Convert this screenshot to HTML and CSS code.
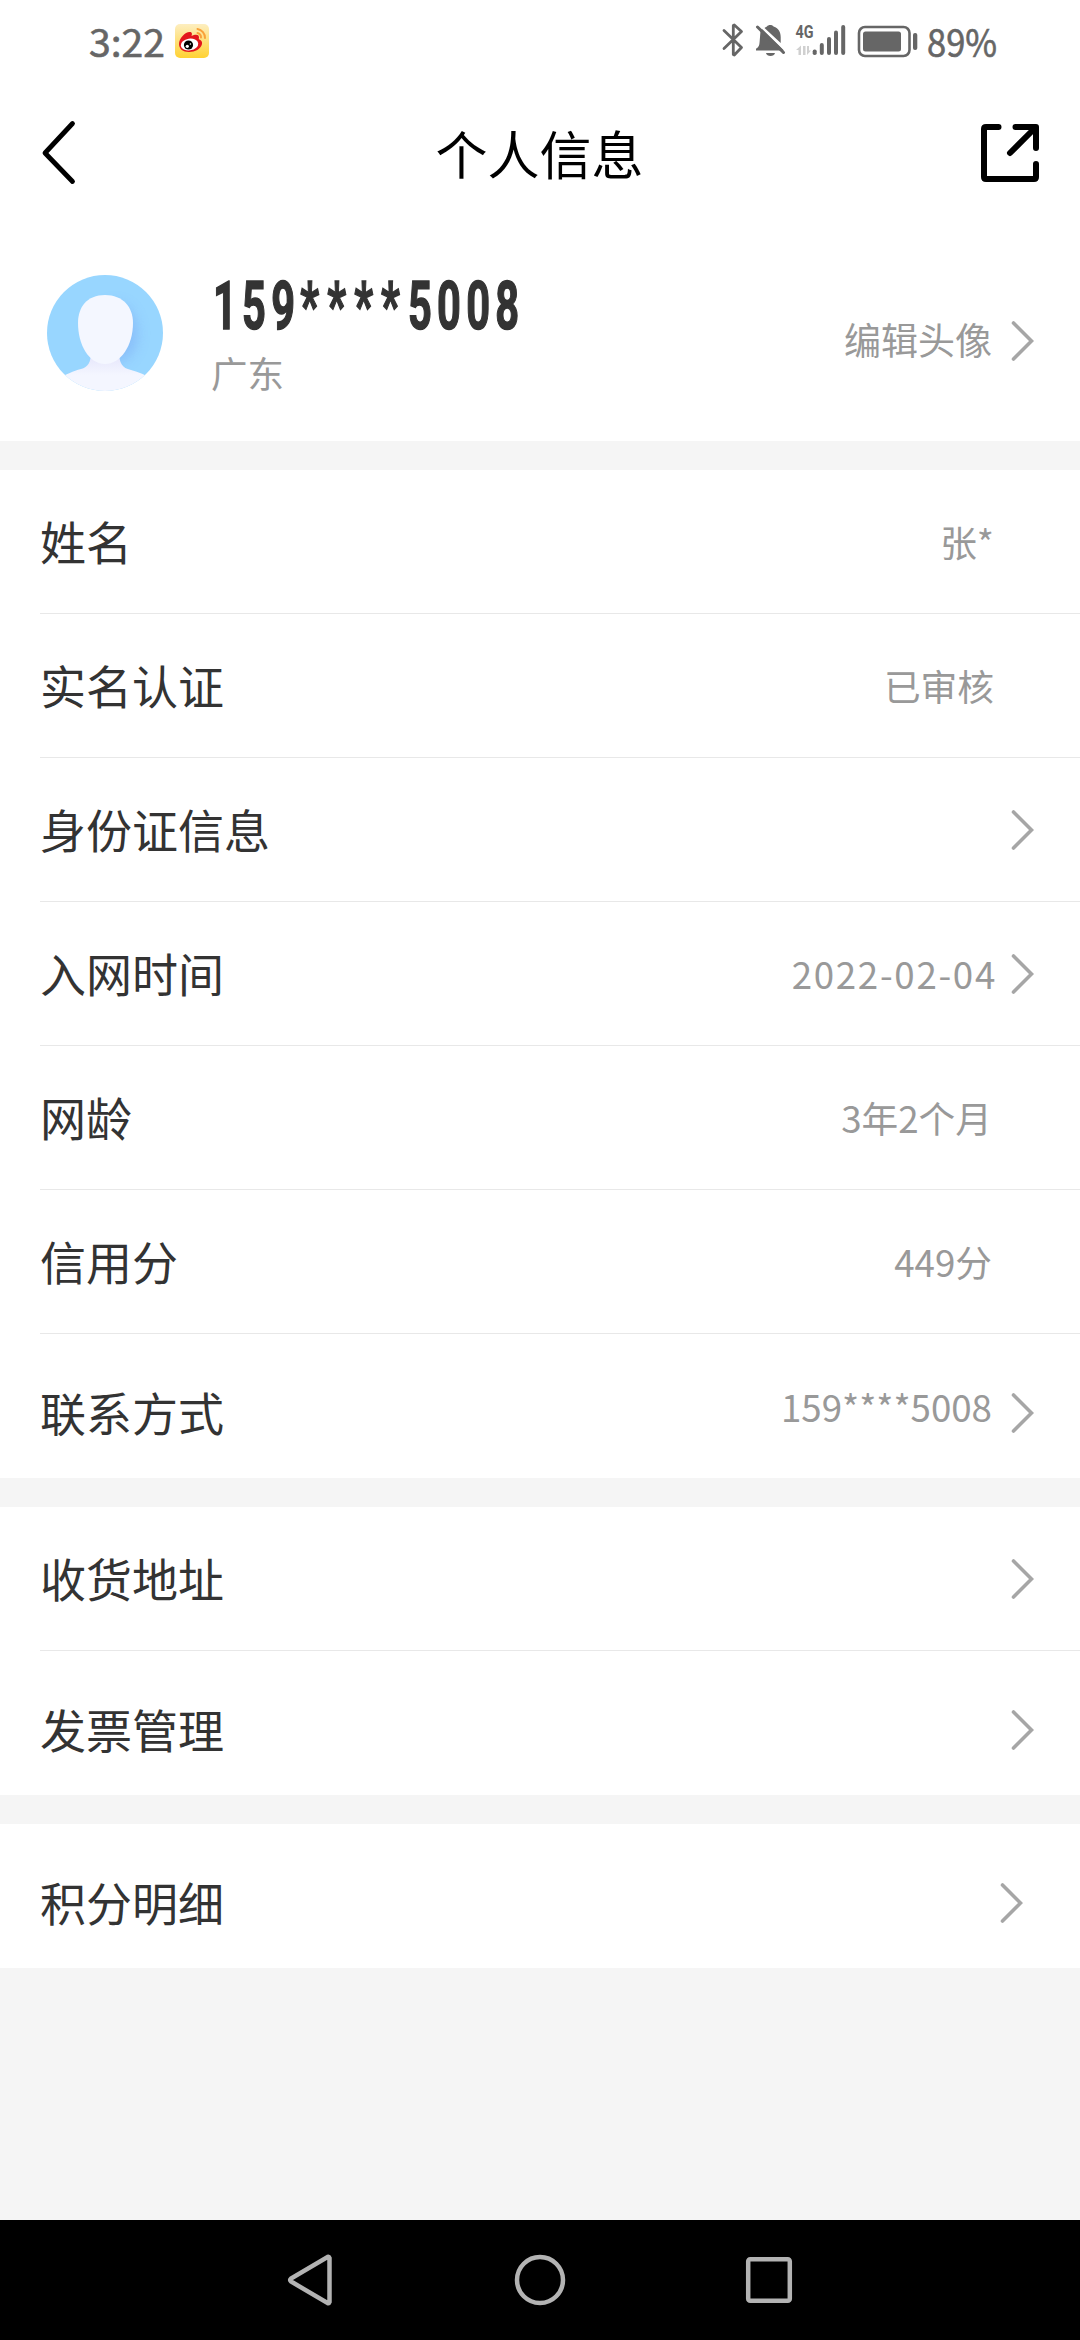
FILE: index.html
```html
<!DOCTYPE html>
<html lang="zh-CN">
  <head>
    <meta charset="UTF-8" />
    <meta name="viewport" content="width=device-width, initial-scale=1.0" />
    <title>个人信息</title>
    <link rel="stylesheet" href="styles.css">
  </head>
  <body>
    <svg class="sprite" width="0" height="0">
      <symbol id="chevron" viewBox="0 0 24 42">
        <path d="M3.500 3 L21.500 21 L3.500 39" fill="none" stroke="#a6a6a6" stroke-width="3.600" stroke-linecap="round" />
      </symbol>
    </svg>

    <div class="status-bar">
      <div class="status-left">
        <svg class="clock" width="76" height="40" viewBox="0 0 76 40"><text x="0" y="33.5" textLength="76" lengthAdjust="spacingAndGlyphs">3:22</text></svg>
        <svg class="weibo" width="34" height="34" viewBox="0 0 34 34">
          <defs>
            <linearGradient id="weibo-bg" x1="0" y1="0" x2="0" y2="1">
              <stop offset="0" stop-color="#fdeec0" />
              <stop offset="1" stop-color="#ffd233" />
            </linearGradient>
          </defs>
          <rect width="34" height="34" rx="5" fill="url(#weibo-bg)" />
          <path d="M4 20 C4 14 11 7 15.500 8 C17.500 8.500 17 11 16.500 12 C20 10.500 24 10 24 13.500 C24 14.500 23.500 15 24 15.300 C26 16 27.500 17.500 27 20 C26 25 20 28 14 28 C8 28 4 25 4 20 Z" fill="#e2161c" />
          <ellipse cx="14.500" cy="20.500" rx="8.800" ry="5.900" transform="rotate(-8 14.500 20.500)" fill="#fff" />
          <circle cx="13.500" cy="21" r="4.600" fill="#000" />
          <circle cx="12.300" cy="22.300" r="1.600" fill="#fff" />
          <circle cx="15.400" cy="20" r=".8" fill="#fff" />
          <path d="M22.500 5 A9 9 0 0 1 30 14 M22.500 9 A4.500 4.500 0 0 1 26 13.500" fill="none" stroke="#f9a13a" stroke-width="2" stroke-linecap="round" />
        </svg>
      </div>
      <div class="status-right">
        <svg width="207" height="40" viewBox="720 20 207 40" fill="#666">
          <!-- bluetooth -->
          <path d="M724 30.500 L741.500 47.500 L734.300 55 L733.300 54.500 V25.500 L734.300 25 L741.500 31.500 L724 48.500" fill="none" stroke="#666" stroke-width="2.800" stroke-linecap="round" stroke-linejoin="round" />
          <!-- muted bell -->
          <path d="M760.500 31 C761 30 761.700 29.500 762.300 29.200 L779.500 46 L784 50.500 H756 V48.800 C758.800 47.500 759.400 45 759.600 42 Z" />
          <path d="M764.500 28 C765.500 27.200 766.500 26.900 767 26.500 C768 24.500 772.500 24.500 773.500 26.500 C779 28.500 780.700 32.500 780.700 37 V43 Z" />
          <path d="M766 53 H775 C774.500 57 766.500 57 766 53 Z" />
          <path d="M757.500 27 L783.500 52.500" stroke="#666" stroke-width="3" stroke-linecap="round" />
          <text class="network" x="795.500" y="38" textLength="18" lengthAdjust="spacingAndGlyphs">4G</text>
          <!-- data arrows -->
          <path d="M796 50 L801 45.500 V55 H798.500 V50 Z M803 46 H805.500 V55 H803 Z M807 46 H809 V50.500 H811 L807 55 Z" fill="#d0d0d0" />
          <!-- signal -->
          <rect x="812.700" y="49.500" width="4" height="5.500" rx="1.800" />
          <rect x="819.800" y="43" width="4" height="12" rx="2" />
          <rect x="827" y="37" width="4" height="18" rx="2" />
          <rect x="834" y="30.500" width="4" height="24.500" rx="2" />
          <rect x="841.200" y="25" width="4" height="30" rx="2" />
          <!-- battery -->
          <rect x="859" y="27" width="50.500" height="29" rx="6" fill="none" stroke="#666" stroke-width="2.600" />
          <rect x="863" y="31.500" width="38" height="20" rx="2.500" />
          <rect x="913" y="33" width="4.300" height="17" rx="2" />
        </svg>
        <svg class="battery-level" width="69" height="40" viewBox="0 0 69 40"><text x="0" y="33.500" textLength="70" lengthAdjust="spacingAndGlyphs">89%</text></svg>
      </div>
    </div>

    <header class="title-bar">
      <svg class="back" width="40" height="70" viewBox="0 0 40 70">
        <path d="M33.500 7.500 L6 37 L33.500 65.500" fill="none" stroke="#000" stroke-width="4.800" stroke-linecap="round" stroke-linejoin="round" />
      </svg>
      <h1 class="title">个人信息</h1>
      <svg class="share" width="60" height="60" viewBox="0 0 60 60">
        <path d="M18.500 4 H6 Q4 4 4 6 V54 Q4 56 6 56 H54 Q56 56 56 54 V41 M35.500 4 H56 V25 M55 5 L30 30" fill="none" stroke="#000" stroke-width="6" stroke-linecap="round" stroke-linejoin="round" />
      </svg>
    </header>

    <section class="profile">
      <svg class="avatar" width="116" height="116" viewBox="0 0 116 116">
        <defs>
          <clipPath id="avatar-clip"><circle cx="58" cy="58" r="58" /></clipPath>
          <filter id="soft" x="-40%" y="-40%" width="180%" height="180%"><feGaussianBlur stdDeviation="6" /></filter>
          <linearGradient id="neck" x1="0" y1="0" x2="0" y2="1">
            <stop offset="0" stop-color="#e2e2fa" />
            <stop offset=".6" stop-color="#f4f6ff" />
          </linearGradient>
        </defs>
        <g clip-path="url(#avatar-clip)">
          <rect width="116" height="116" fill="#98d6ff" />
          <ellipse cx="68" cy="58" rx="23" ry="30" fill="#85b8f8" opacity=".75" filter="url(#soft)" />
          <path d="M44 76 C44 88 41 92 34 94 C26 96 20 99 10 104 V116 H106 V104 C98 100 92 97 84 95 C75 93 72 88 72 76 Z" fill="url(#neck)" />
          <path d="M58 20 C76 20 86 32 86 48 C86 70 74 89 58 89 C42 89 31 70 31 48 C31 32 40 20 58 20 Z" fill="#f4f7ff" />
        </g>
      </svg>
      <div class="profile-info">
        <div class="phone">159<span class="mask">****</span>5008</div>
        <p class="province">广东</p>
      </div>
      <div class="edit-avatar">编辑头像</div>
      <svg class="chevron"><use href="#chevron" /></svg>
    </section>

    <ul class="list">
      <li class="row">
        <span class="label">姓名</span>
        <span class="value">张*</span>
      </li>
      <li class="row">
        <span class="label">实名认证</span>
        <span class="value">已审核</span>
      </li>
      <li class="row">
        <span class="label">身份证信息</span>
        <svg class="chevron"><use href="#chevron" /></svg>
      </li>
      <li class="row">
        <span class="label">入网时间</span>
        <span class="value date">2022-02-04</span>
        <svg class="chevron"><use href="#chevron" /></svg>
      </li>
      <li class="row">
        <span class="label">网龄</span>
        <span class="value inset">3年2个月</span>
      </li>
      <li class="row">
        <span class="label">信用分</span>
        <span class="value inset">449分</span>
      </li>
      <li class="row low">
        <span class="label">联系方式</span>
        <span class="value contact">159****5008</span>
        <svg class="chevron"><use href="#chevron" /></svg>
      </li>
    </ul>

    <ul class="list">
      <li class="row">
        <span class="label">收货地址</span>
        <svg class="chevron"><use href="#chevron" /></svg>
      </li>
      <li class="row low">
        <span class="label">发票管理</span>
        <svg class="chevron"><use href="#chevron" /></svg>
      </li>
    </ul>

    <ul class="list">
      <li class="row low points">
        <span class="label">积分明细</span>
        <svg class="chevron"><use href="#chevron" /></svg>
      </li>
    </ul>

    <nav class="nav-bar">
      <svg width="54" height="54" viewBox="0 0 54 54"><path d="M45.500 5 V49 Q45 50.500 43.500 50 L7 28.500 Q5.500 27 7 25.500 L43.500 4 Q45 3.500 45.500 5 Z" /></svg>
      <svg width="54" height="54" viewBox="0 0 54 54"><circle cx="27" cy="27" r="23" /></svg>
      <svg width="54" height="54" viewBox="0 0 54 54"><rect x="6.200" y="6.200" width="41.600" height="41.600" rx="2" /></svg>
    </nav>
  </body>
</html>
```
FILE: styles.css
```css
* {
  box-sizing: border-box;
  margin: 0;
  padding: 0;
}

body {
  display: flex;
  flex-direction: column;
  height: 2340px;
  background: #f5f5f5;
  color: #333;
  font-family: 'Noto Sans CJK SC', sans-serif;
}

svg {
  display: block;
  flex: none;
}

.sprite {
  position: absolute;
}

/* status bar */
.status-bar {
  display: flex;
  justify-content: space-between;
  height: 84px;
  padding: 20px 84px 0 89px;
  background: #fff;
}

.status-left,
.status-right {
  display: flex;
}

.status-left {
  gap: 10px;
}

.weibo {
  margin-top: 4px;
}

.clock text,
.battery-level text {
  font-family: 'Noto Sans CJK SC', sans-serif;
  font-size: 38px;
  fill: #666;
  stroke: #666;
  stroke-width: 0.6;
}

.clock,
.battery-level {
  overflow: visible;
  margin-top: 3px;
}

.network {
  font-family: Roboto, sans-serif;
  font-size: 18px;
  font-weight: 700;
}

/* title */
.title-bar {
  display: flex;
  align-items: center;
  justify-content: space-between;
  height: 138px;
  padding: 0 40px 0 39px;
  background: #fff;
}

.back {
  margin: -4px 20px 0 0;
}

.title {
  color: #000;
  font-size: 52px;
  font-weight: 400;
  line-height: 76px;
}

/* profile */
.profile {
  display: flex;
  height: 219px;
  padding: 53px 46px 0 47px;
  background: #fff;
}

.profile-info {
  flex: 1;
  padding-left: 48px;
}

.phone {
  width: 310px;
  height: 60px;
  margin-left: 2px;
  font-family: Roboto, sans-serif;
  font-size: 67px;
  font-weight: 700;
  letter-spacing: 8.5px;
  line-height: 62px;
  white-space: nowrap;
  transform: scaleX(0.62);
  transform-origin: left center;
  -webkit-text-stroke: 1.5px #333;
}

.mask {
  letter-spacing: 13px;
}

.province {
  margin-top: 11px;
  color: #999;
  font-size: 36.5px;
  line-height: 54px;
}

.edit-avatar {
  margin: 37px 18px 0 0;
  color: #999;
  font-size: 37px;
  line-height: 54px;
}

.chevron {
  width: 24px;
  height: 42px;
}

.profile .chevron {
  margin-top: 45px;
}

/* lists */
.list {
  margin-top: 29px;
  padding-left: 40px;
  background: #fff;
  list-style: none;
}

.row {
  display: flex;
  align-items: center;
  height: 144px;
  padding-right: 46px;
  border-bottom: 1px solid #e8e8e8;
}

.row:last-child {
  border-bottom: none;
}

.low {
  padding-top: 13px;
}

.points {
  padding-right: 57px;
}

.label {
  flex: 1;
  padding-bottom: 3px;
  font-size: 46px;
  line-height: 68px;
}

.value {
  padding: 0 40px 2px 0;
  color: #999;
  font-size: 36.7px;
  line-height: 54px;
}

.inset {
  padding-right: 42px;
}

.date {
  padding-right: 13px;
  letter-spacing: 1.7px;
}

.contact {
  margin-top: -11px;
  padding-right: 18px;
}

/* system navigation */
.nav-bar {
  display: flex;
  justify-content: center;
  gap: 175px;
  height: 120px;
  margin-top: auto;
  padding-top: 33px;
  background: #000;
}

.nav-bar svg {
  fill: none;
  stroke: #b3b3b3;
  stroke-width: 4.5;
}
```
